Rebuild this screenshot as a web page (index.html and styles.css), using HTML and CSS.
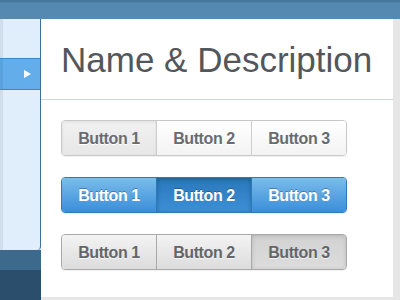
FILE: index.html
```html
<!DOCTYPE html>
<html>
<head>
<meta charset="utf-8">
<link rel="stylesheet" href="styles.css">
</head>
<body>
<div class="app">
  <div class="topbar"></div>
  <div class="body">
    <div class="left">
      <div class="sidebar">
        <div class="side-row"></div>
        <div class="side-row selected"><span class="arrow"></span></div>
        <div class="side-row fill"></div>
      </div>
      <div class="left-foot">
        <div class="foot-a"></div>
        <div class="foot-b"></div>
      </div>
    </div>
    <div class="main">
      <div class="title-bar"><h1 class="title">Name &amp; Description</h1></div>
      <div class="groups">
        <div class="group light">
          <div class="btn active">Button 1</div>
          <div class="btn">Button 2</div>
          <div class="btn">Button 3</div>
        </div>
        <div class="group blue">
          <div class="btn">Button 1</div>
          <div class="btn active">Button 2</div>
          <div class="btn">Button 3</div>
        </div>
        <div class="group gray">
          <div class="btn">Button 1</div>
          <div class="btn">Button 2</div>
          <div class="btn active">Button 3</div>
        </div>
      </div>
    </div>
  </div>
</div>
</body>
</html>
```
FILE: styles.css
```css
* { box-sizing: border-box; }
html, body { margin: 0; padding: 0; }
body {
  width: 400px;
  height: 300px;
  overflow: hidden;
  background: #e6e6e6;
  font-family: "Liberation Sans", Arial, sans-serif;
}
.app { display: flex; flex-direction: column; height: 300px; }
.topbar {
  height: 19px;
  background: linear-gradient(#45769c 0, #45769c 2px, #5589b2 3px, #5589b2 100%);
}
.body { display: flex; flex: 1; }
.left { width: 41px; display: flex; flex-direction: column; }
.sidebar {
  height: 231px;
  background: linear-gradient(90deg, #cfdeea 0, #cfdeea 3px, #dfeefa 3px);
  border-right: 1px solid #3e6f98;
  border-bottom-right-radius: 4px;
  display: flex;
  flex-direction: column;
}
.side-row { height: 39px; }
.side-row.selected {
  height: 32px;
  background: linear-gradient(90deg, #5aa2dc 0, #5aa2dc 3px, #63aeea 3px);
  border-top: 1px solid #3f86c4;
  border-bottom: 1px solid #3f86c4;
  display: flex;
  align-items: center;
  justify-content: flex-end;
  padding-right: 9px;
}
.side-row.fill { flex: 1; }
.arrow {
  width: 0; height: 0;
  border-left: 7px solid #fff;
  border-top: 4.5px solid transparent;
  border-bottom: 4.5px solid transparent;
}
.left-foot { flex: 1; display: flex; flex-direction: column; }
.foot-a { height: 20px; background: #3b6a8d; }
.foot-b { flex: 1; background: #2c4e6d; }
.main {
  width: 352px;
  height: 278px;
  background: #fff;
}
.title-bar {
  height: 81px;
  border-bottom: 1px solid #cbd9e5;
  display: flex;
  align-items: center;
  padding-left: 20px;
}
.title {
  margin: 0;
  font-weight: normal;
  font-size: 35px;
  color: #52575b;
  line-height: 1;
  padding-top: 1px;
}
.groups {
  padding: 20px 0 0 20px;
  display: flex;
  flex-direction: column;
  gap: 21px;
}
.group {
  display: flex;
  width: 286px;
  height: 36px;
  border-radius: 4px;
  border: 1px solid #c8c8c8;
  overflow: hidden;
  box-shadow: 0 1px 1px rgba(0,0,0,0.06);
}
.btn {
  flex: 1;
  display: flex;
  align-items: center;
  justify-content: center;
  font-weight: bold;
  font-size: 16px;
  letter-spacing: -0.4px;
  padding-top: 2px;
}
.btn + .btn { border-left: 1px solid #cfcfcf; }

.light .btn {
  color: #686c70;
  background: linear-gradient(#ffffff, #f3f3f3);
  text-shadow: 0 1px 0 #fff;
}
.light .btn.active {
  background: linear-gradient(#f1f1f1, #e7e7e7);
  box-shadow: inset 0 1px 3px rgba(0,0,0,0.08);
}
.light .btn + .btn { border-left-color: #cdcdcd; }

.blue { border-color: #2f79ba; }
.blue .btn {
  color: #fff;
  background: linear-gradient(#7bbcec, #3a8ed8);
  text-shadow: 0 -1px 0 rgba(0,0,0,0.3);
}
.blue .btn.active {
  background: linear-gradient(#2a77bb, #3d90d6);
  box-shadow: inset 0 1px 4px rgba(0,0,0,0.25);
}
.blue .btn + .btn { border-left-color: #2e78b8; }

.gray { border-color: #a9a9a9; }
.gray .btn {
  color: #636669;
  background: linear-gradient(#f3f3f3, #dcdcdc);
  text-shadow: 0 1px 0 rgba(255,255,255,0.7);
}
.gray .btn.active {
  background: linear-gradient(#d2d2d2, #dcdcdc);
  box-shadow: inset 0 1px 4px rgba(0,0,0,0.15);
}
.gray .btn + .btn { border-left-color: #a8a8a8; }
```
